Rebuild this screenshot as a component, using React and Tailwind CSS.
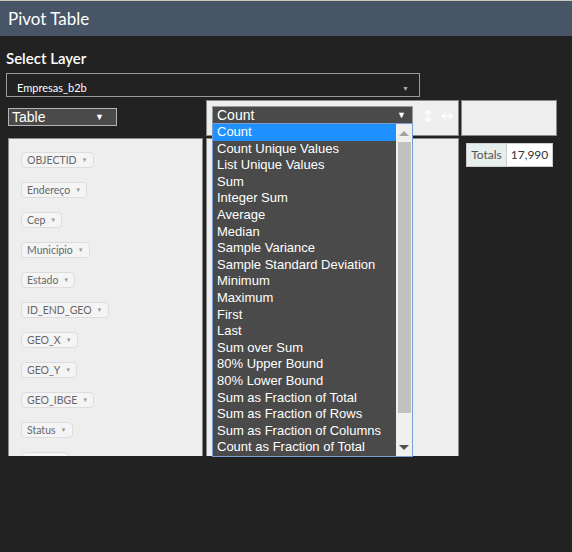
import React from 'react';

const fields = ['OBJECTID', 'Endereço', 'Cep', 'Municipio', 'Estado', 'ID_END_GEO', 'GEO_X', 'GEO_Y', 'GEO_IBGE', 'Status', 'Setor'];

const aggregators = [
  'Count',
  'Count Unique Values',
  'List Unique Values',
  'Sum',
  'Integer Sum',
  'Average',
  'Median',
  'Sample Variance',
  'Sample Standard Deviation',
  'Minimum',
  'Maximum',
  'First',
  'Last',
  'Sum over Sum',
  '80% Upper Bound',
  '80% Lower Bound',
  'Sum as Fraction of Total',
  'Sum as Fraction of Rows',
  'Sum as Fraction of Columns',
  'Count as Fraction of Total'
];

const arial = { fontFamily: '"Liberation Sans", Arial, sans-serif' };

const FieldChip = ({ name }) => (
  <div className="h-[30px] flex items-start">
    <span className="inline-flex items-center h-[16px] px-[5px] rounded-[4px] border border-[#dddddd] bg-[#f4f4f4] text-[10.5px] text-[#666] leading-none">
      {name}
      <span className="ml-[5px] text-[6px] text-[#999]">▼</span>
    </span>
  </div>
);

const AggregatorList = () => (
  <div className="absolute left-[-1px] top-full w-[201px] border border-[#7a9cd3] bg-[#4a4a4a] z-10" style={arial}>
    {aggregators.map((a, i) => (
      <div
        key={a}
        className={`h-[16.6px] pl-[4px] text-[13px] leading-[16.6px] text-white whitespace-nowrap ${i === 0 ? 'bg-[#1e90ff]' : ''}`}
      >
        {a}
      </div>
    ))}
    <div className="absolute right-0 top-0 bottom-0 w-[16px] bg-[#f0f0f0] flex flex-col items-center">
      <div className="h-[18px] flex items-center justify-center">
        <div className="w-0 h-0 border-l-[5px] border-r-[5px] border-b-[5px] border-l-transparent border-r-transparent border-b-[#a3a3a3]" />
      </div>
      <div className="w-[13px] h-[271px] bg-[#c1c1c1]" />
      <div className="flex-1 flex items-end justify-center pb-[6px]">
        <div className="w-0 h-0 border-l-[5px] border-r-[5px] border-t-[5px] border-l-transparent border-r-transparent border-t-[#505050]" />
      </div>
    </div>
  </div>
);

export default function App() {
  return (
    <div className="w-[572px] h-[552px] bg-[#222222] overflow-hidden" style={{ fontFamily: 'Lato, "Open Sans", sans-serif' }}>
      <div className="h-[1px] bg-[#c8cbb9]" />
      <div className="h-[35px] bg-[#485566] flex items-center pl-[8px]">
        <span className="text-[17px] text-white">Pivot Table</span>
      </div>

      <div className="pl-[6px] pt-[13px]">
        <div className="text-[15px] text-white font-semibold leading-[18px]">Select Layer</div>
        <div className="mt-[6px] w-[414px] h-[24px] border border-[#9a9a9a] flex items-end pb-[3px] pl-[10px] pr-[10px] justify-between">
          <span className="text-[11px] text-white leading-none">Empresas_b2b</span>
          <span className="text-[7px] text-[#aaa] leading-none mb-[1px]">▼</span>
        </div>
      </div>

      <div className="pl-[8px] mt-[3px] flex">
        <div className="w-[195px] pt-[8px]">
          <div className="w-[109px] h-[18px] bg-[#4a4a4a] border border-[#b5b5b5] flex items-center justify-between pl-[3px] pr-[12px]" style={arial}>
            <span className="text-[14px] text-white leading-none">Table</span>
            <span className="text-[9px] text-white leading-none">▼</span>
          </div>
        </div>
        <div className="ml-[3px] w-[253px] h-[36px] bg-[#eeeeee] border border-[#8a8a8a] pl-[5px] pt-[5px] flex items-start">
          <div className="relative w-[201px] h-[18px] bg-[#4a4a4a] border border-[#9a9a9a] flex items-center justify-between pl-[4px] pr-[6px]" style={arial}>
            <span className="text-[14px] text-white leading-none">Count</span>
            <span className="text-[9px] text-white leading-none">▼</span>
            <AggregatorList />
          </div>
          <span className="ml-[10px] mt-[3px] text-[13px] text-white font-bold leading-none">↕</span>
          <span className="ml-[8px] mt-[3px] text-[13px] text-white font-bold leading-none">↔</span>
        </div>
        <div className="ml-[2px] w-[96px] h-[36px] bg-[#eeeeee] border border-[#8a8a8a]" />
      </div>

      <div className="pl-[8px] mt-[2px] flex h-[318px] overflow-hidden">
        <div className="w-[195px] bg-[#eeeeee] border-t border-l border-r border-[#8a8a8a] pl-[12px] pt-[13px] overflow-hidden">
          {fields.map((f) => (
            <FieldChip key={f} name={f} />
          ))}
        </div>
        <div className="ml-[3px] w-[253px] bg-[#eeeeee] border-t border-l border-r border-[#8a8a8a]" />
        <div className="ml-[7px] pt-[5px]">
          <div className="flex h-[24px] border border-[#cdcdcd] text-[12px] text-[#333]">
            <div className="w-[40px] bg-[#e6eeee] border-r border-[#cdcdcd] flex items-center justify-center text-[#555]">Totals</div>
            <div className="w-[45px] bg-white flex items-center justify-center">17,990</div>
          </div>
        </div>
      </div>
    </div>
  );
}
